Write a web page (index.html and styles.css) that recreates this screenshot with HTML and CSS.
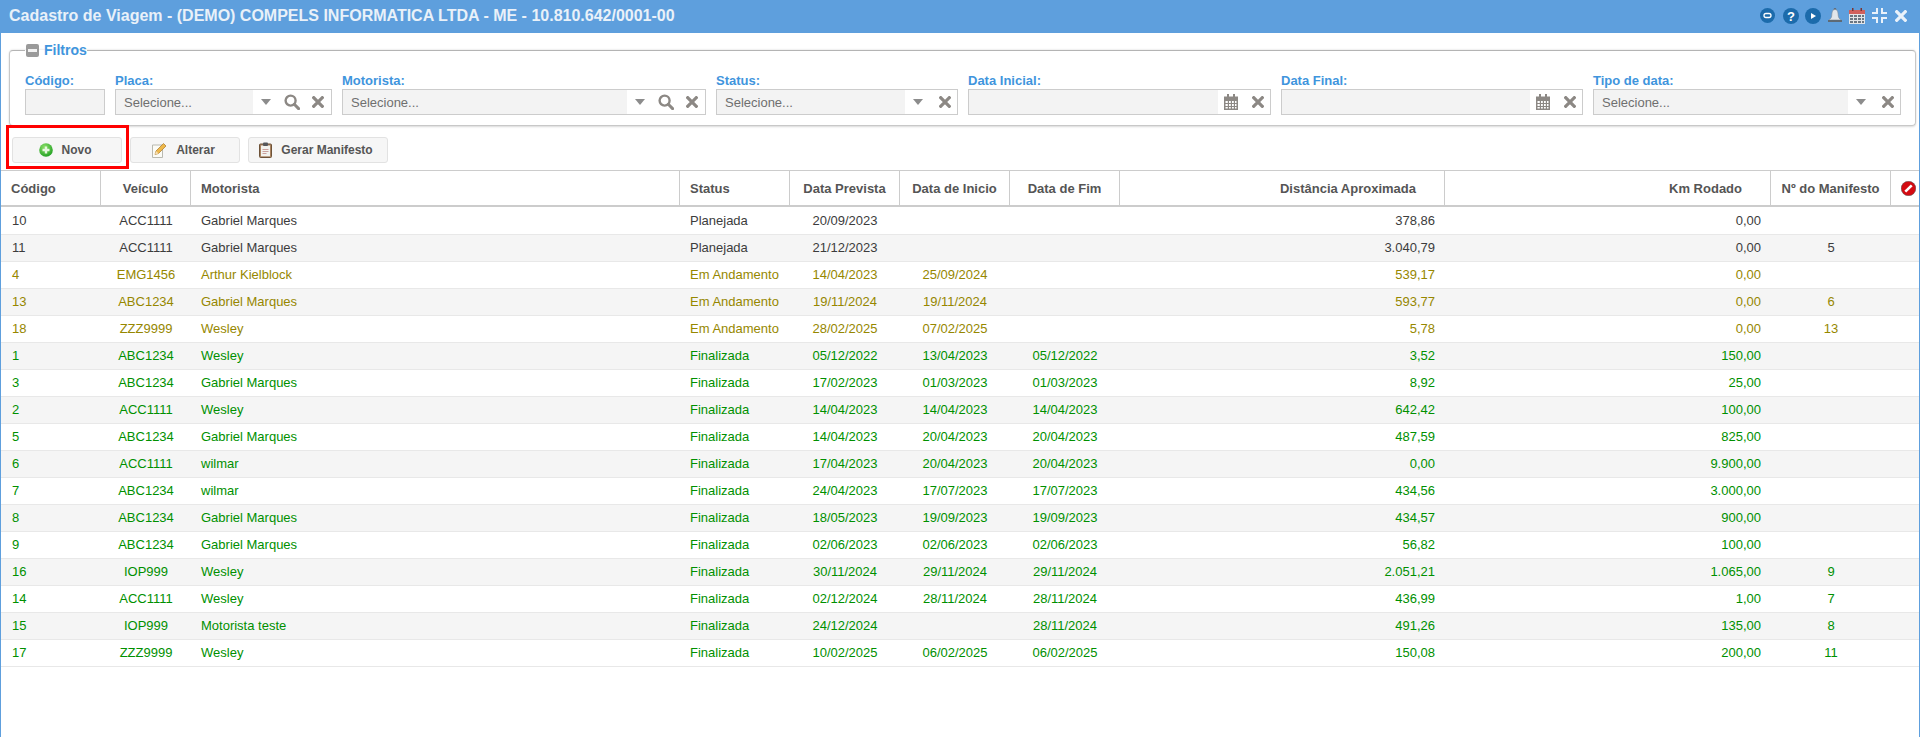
FILE: index.html
```html
<!DOCTYPE html>
<html lang="pt-BR">
<head>
<meta charset="utf-8">
<title>Cadastro de Viagem</title>
<link rel="stylesheet" href="styles.css">
</head>
<body>
<svg class="defs" width="0" height="0" aria-hidden="true">
  <symbol id="i-caret" viewBox="0 0 10 6"><path d="M0 0h10L5 6z" fill="#8c8c8c"/></symbol>
  <symbol id="i-search" viewBox="0 0 16 16"><circle cx="6.600" cy="6.600" r="5" fill="none" stroke="#8c8884" stroke-width="2.400"/><path d="M10.300 10.300l4.300 4.300" stroke="#8c8884" stroke-width="3" stroke-linecap="round"/></symbol>
  <symbol id="i-x" viewBox="0 0 12 12"><path d="M1.700 1.700l8.600 8.600M10.300 1.700l-8.600 8.600" stroke="#8c8884" stroke-width="3.200" stroke-linecap="square"/></symbol>
  <symbol id="i-cal" viewBox="0 0 14 16"><path d="M0 2.500h14V16H0z" fill="#8c8884"/><path d="M3 0h2v3H3zM9 0h2v3H9z" fill="#8c8884"/><path d="M1.500 7h2.300v2H1.500zM5 7h1.800v2H5zM8 7h1.800v2H8zM11 7h1.500v2H11zM1.500 10h2.300v2H1.500zM5 10h1.800v2H5zM8 10h1.800v2H8zM11 10h1.500v2H11zM1.500 13h2.300v1.500H1.500zM5 13h1.800v1.500H5zM8 13h1.800v1.500H8zM11 13h1.500v1.500H11z" fill="#fff"/></symbol>
</svg>
<div class="window">
  <header class="titlebar">
    <h1 class="title">Cadastro de Viagem - (DEMO) COMPELS INFORMATICA LTDA - ME - 10.810.642/0001-00</h1>
    <div class="title-icons">
      <svg class="ti ti-chat" width="15" height="15" viewBox="0 0 15 15"><circle cx="7.500" cy="7.500" r="7.500" fill="#1c6bab"/><rect x="4" y="5.500" width="7" height="4" rx="2" fill="none" stroke="#fff" stroke-width="1.300"/></svg>
      <svg class="ti ti-help" width="16" height="16" viewBox="0 0 16 16"><circle cx="8" cy="8" r="8" fill="#1c6bab"/><text x="8" y="12.500" text-anchor="middle" class="q">?</text></svg>
      <svg class="ti ti-play" width="16" height="16" viewBox="0 0 16 16"><circle cx="8" cy="8" r="8" fill="#1c6bab"/><path d="M6 5l5 3-5 3z" fill="#fff"/></svg>
      <svg class="ti ti-bell" width="14" height="15" viewBox="0 0 14 15"><circle cx="7" cy="1.300" r="1.300" fill="#5e6a75"/><path d="M7 1.500C4 1.500 4 5 3.700 8 3.500 10 2.300 11 .8 12h12.400C11.700 11 10.500 10 10.300 8 10 5 10 1.500 7 1.500z" fill="#e2e6ea" stroke="#7f8a96" stroke-width=".6"/><path d="M0 12h14v2H0z" fill="#5e6a75"/></svg>
      <svg class="ti ti-calendar" width="16" height="16" viewBox="0 0 16 16"><path d="M0 2h16v14H0z" fill="#e2e5e8"/><path d="M0 2h16v4H0z" fill="#d0605c"/><path d="M3 0h1.500v3H3zM11.500 0H13v3h-1.500z" fill="#7c3330"/><path d="M1 7h3v2H1zM5 7h3v2H5zM9 7h3v2H9zM13 7h2v2h-2zM1 10h3v2H1zM5 10h3v2H5zM9 10h3v2H9zM13 10h2v2h-2zM1 13h3v2H1zM5 13h3v2H5zM9 13h3v2H9zM13 13h2v2h-2z" fill="#6a7580"/></svg>
      <svg class="ti ti-compress" width="15" height="15" viewBox="0 0 15 15"><path d="M5 0v5H0M10 0v5h5M5 15v-5H0M10 15v-5h5" fill="none" stroke="#eaf2fa" stroke-width="2"/></svg>
      <svg class="ti ti-close" width="12" height="12" viewBox="0 0 12 12"><path d="M1.700 1.700l8.600 8.600M10.300 1.700l-8.600 8.600" stroke="#eaf2fa" stroke-width="3.200" stroke-linecap="square"/></svg>
    </div>
  </header>

  <main class="content">
    <fieldset class="filters">
      <legend class="filters-legend"><span class="collapse"><span class="collapse-bar"></span></span>Filtros</legend>
      <div class="filter-grid">
        <div class="field"><label class="field-label">Código:</label><div class="box"><div class="box-input"></div></div></div>
        <div class="field"><label class="field-label">Placa:</label><div class="box"><div class="box-input">Selecione...</div><div class="box-tools tools-3"><svg class="ic-caret"><use href="#i-caret"/></svg><svg class="ic-search"><use href="#i-search"/></svg><svg class="ic-x"><use href="#i-x"/></svg></div></div></div>
        <div class="field"><label class="field-label">Motorista:</label><div class="box"><div class="box-input">Selecione...</div><div class="box-tools tools-3"><svg class="ic-caret"><use href="#i-caret"/></svg><svg class="ic-search"><use href="#i-search"/></svg><svg class="ic-x"><use href="#i-x"/></svg></div></div></div>
        <div class="field"><label class="field-label">Status:</label><div class="box"><div class="box-input">Selecione...</div><div class="box-tools tools-2"><svg class="ic-caret"><use href="#i-caret"/></svg><svg class="ic-x"><use href="#i-x"/></svg></div></div></div>
        <div class="field"><label class="field-label">Data Inicial:</label><div class="box"><div class="box-input"></div><div class="box-tools tools-2"><svg class="ic-cal"><use href="#i-cal"/></svg><svg class="ic-x"><use href="#i-x"/></svg></div></div></div>
        <div class="field"><label class="field-label">Data Final:</label><div class="box"><div class="box-input"></div><div class="box-tools tools-2"><svg class="ic-cal"><use href="#i-cal"/></svg><svg class="ic-x"><use href="#i-x"/></svg></div></div></div>
        <div class="field"><label class="field-label">Tipo de data:</label><div class="box"><div class="box-input">Selecione...</div><div class="box-tools tools-2"><svg class="ic-caret"><use href="#i-caret"/></svg><svg class="ic-x"><use href="#i-x"/></svg></div></div></div>
      </div>
    </fieldset>

    <div class="toolbar">
      <button class="btn btn-new" type="button">
        <svg width="14" height="14" viewBox="0 0 14 14"><defs><radialGradient id="g-new" cx="40%" cy="30%" r="80%"><stop offset="0" stop-color="#8ee06a"/><stop offset="1" stop-color="#179a1c"/></radialGradient></defs><circle cx="7" cy="7" r="6.800" fill="url(#g-new)"/><path d="M5.800 3.500h2.400v2.300h2.300v2.400H8.200v2.300H5.800V8.200H3.500V5.800h2.300z" fill="#e8f7e0"/></svg>
        Novo
        <span class="btn-highlight"></span>
      </button>
      <button class="btn btn-edit" type="button">
        <svg width="16" height="16" viewBox="0 0 16 16"><path d="M1.500 3h10v12.500h-10z" fill="#fbfbf6" stroke="#b9b9b0"/><path d="M4 12.500l1-3.500 7.500-7.500 2.500 2.500L7.500 11.500z" fill="#eeb84a" stroke="#a8772a" stroke-width=".7"/><path d="M4 12.500l1-3.500 2.500 2.500z" fill="#f6dfb5"/></svg>
        Alterar
      </button>
      <button class="btn btn-manifest" type="button">
        <svg width="13" height="16" viewBox="0 0 13 16"><rect x=".5" y="2" width="12" height="13.500" rx="1" fill="#a9825f" stroke="#6d5238"/><rect x="2" y="3.500" width="9" height="10.800" fill="#f2f2ee"/><rect x="4" y=".5" width="5" height="3.500" rx="1" fill="#54565a"/><path d="M3.500 7.500h6M3.500 9.500h6M3.500 11.500h4" stroke="#c08a86" stroke-width=".8"/></svg>
        Gerar Manifesto
      </button>
    </div>

    <table class="grid">
      <colgroup>
        <col class="c-code"><col class="c-plate"><col class="c-driver"><col class="c-date"><col class="c-date"><col class="c-date"><col class="c-date"><col class="c-dist"><col class="c-km"><col class="c-man"><col class="c-end">
      </colgroup>
      <thead>
        <tr>
          <th class="left">Código</th><th>Veículo</th><th class="left">Motorista</th><th class="left">Status</th><th>Data Prevista</th><th>Data de Inicio</th><th>Data de Fim</th><th class="right">Distância Aproximada</th><th class="right">Km Rodado</th><th>Nº do Manifesto</th>
          <th class="end"><svg width="15" height="15" viewBox="0 0 14 14"><circle cx="7" cy="7" r="6.800" fill="#d40b12" stroke="#555" stroke-width=".5"/><path d="M4 10l6-6" stroke="#fff" stroke-width="2.400"/></svg></th>
        </tr>
      </thead>
      <tbody>
        <tr class="planned"><td class="left">10</td><td>ACC1111</td><td class="left">Gabriel Marques</td><td class="left">Planejada</td><td>20/09/2023</td><td></td><td></td><td class="right">378,86</td><td class="right">0,00</td><td></td><td></td></tr>
        <tr class="planned"><td class="left">11</td><td>ACC1111</td><td class="left">Gabriel Marques</td><td class="left">Planejada</td><td>21/12/2023</td><td></td><td></td><td class="right">3.040,79</td><td class="right">0,00</td><td>5</td><td></td></tr>
        <tr class="running"><td class="left">4</td><td>EMG1456</td><td class="left">Arthur Kielblock</td><td class="left">Em Andamento</td><td>14/04/2023</td><td>25/09/2024</td><td></td><td class="right">539,17</td><td class="right">0,00</td><td></td><td></td></tr>
        <tr class="running"><td class="left">13</td><td>ABC1234</td><td class="left">Gabriel Marques</td><td class="left">Em Andamento</td><td>19/11/2024</td><td>19/11/2024</td><td></td><td class="right">593,77</td><td class="right">0,00</td><td>6</td><td></td></tr>
        <tr class="running"><td class="left">18</td><td>ZZZ9999</td><td class="left">Wesley</td><td class="left">Em Andamento</td><td>28/02/2025</td><td>07/02/2025</td><td></td><td class="right">5,78</td><td class="right">0,00</td><td>13</td><td></td></tr>
        <tr class="done"><td class="left">1</td><td>ABC1234</td><td class="left">Wesley</td><td class="left">Finalizada</td><td>05/12/2022</td><td>13/04/2023</td><td>05/12/2022</td><td class="right">3,52</td><td class="right">150,00</td><td></td><td></td></tr>
        <tr class="done"><td class="left">3</td><td>ABC1234</td><td class="left">Gabriel Marques</td><td class="left">Finalizada</td><td>17/02/2023</td><td>01/03/2023</td><td>01/03/2023</td><td class="right">8,92</td><td class="right">25,00</td><td></td><td></td></tr>
        <tr class="done"><td class="left">2</td><td>ACC1111</td><td class="left">Wesley</td><td class="left">Finalizada</td><td>14/04/2023</td><td>14/04/2023</td><td>14/04/2023</td><td class="right">642,42</td><td class="right">100,00</td><td></td><td></td></tr>
        <tr class="done"><td class="left">5</td><td>ABC1234</td><td class="left">Gabriel Marques</td><td class="left">Finalizada</td><td>14/04/2023</td><td>20/04/2023</td><td>20/04/2023</td><td class="right">487,59</td><td class="right">825,00</td><td></td><td></td></tr>
        <tr class="done"><td class="left">6</td><td>ACC1111</td><td class="left">wilmar</td><td class="left">Finalizada</td><td>17/04/2023</td><td>20/04/2023</td><td>20/04/2023</td><td class="right">0,00</td><td class="right">9.900,00</td><td></td><td></td></tr>
        <tr class="done"><td class="left">7</td><td>ABC1234</td><td class="left">wilmar</td><td class="left">Finalizada</td><td>24/04/2023</td><td>17/07/2023</td><td>17/07/2023</td><td class="right">434,56</td><td class="right">3.000,00</td><td></td><td></td></tr>
        <tr class="done"><td class="left">8</td><td>ABC1234</td><td class="left">Gabriel Marques</td><td class="left">Finalizada</td><td>18/05/2023</td><td>19/09/2023</td><td>19/09/2023</td><td class="right">434,57</td><td class="right">900,00</td><td></td><td></td></tr>
        <tr class="done"><td class="left">9</td><td>ABC1234</td><td class="left">Gabriel Marques</td><td class="left">Finalizada</td><td>02/06/2023</td><td>02/06/2023</td><td>02/06/2023</td><td class="right">56,82</td><td class="right">100,00</td><td></td><td></td></tr>
        <tr class="done"><td class="left">16</td><td>IOP999</td><td class="left">Wesley</td><td class="left">Finalizada</td><td>30/11/2024</td><td>29/11/2024</td><td>29/11/2024</td><td class="right">2.051,21</td><td class="right">1.065,00</td><td>9</td><td></td></tr>
        <tr class="done"><td class="left">14</td><td>ACC1111</td><td class="left">Wesley</td><td class="left">Finalizada</td><td>02/12/2024</td><td>28/11/2024</td><td>28/11/2024</td><td class="right">436,99</td><td class="right">1,00</td><td>7</td><td></td></tr>
        <tr class="done"><td class="left">15</td><td>IOP999</td><td class="left">Motorista teste</td><td class="left">Finalizada</td><td>24/12/2024</td><td></td><td>28/11/2024</td><td class="right">491,26</td><td class="right">135,00</td><td>8</td><td></td></tr>
        <tr class="done"><td class="left">17</td><td>ZZZ9999</td><td class="left">Wesley</td><td class="left">Finalizada</td><td>10/02/2025</td><td>06/02/2025</td><td>06/02/2025</td><td class="right">150,08</td><td class="right">200,00</td><td>11</td><td></td></tr>
      </tbody>
    </table>
  </main>
</div>
</body>
</html>
```

FILE: styles.css
```css
* { box-sizing: border-box; }
html, body { margin: 0; height: 100%; overflow: hidden; background: #fff; }
body { font-family: "Liberation Sans", Arial, sans-serif; font-size: 13px; color: #444; }
.defs { position: absolute; }

.window { height: 100vh; border-left: 1px solid #5e9fdd; border-right: 1px solid #5e9fdd; display: flex; flex-direction: column; }

.titlebar { flex: none; height: 33px; background: #5e9fdd; margin: 0 -1px; padding: 0 13px 2px 9px; display: flex; align-items: center; justify-content: space-between; }
.title { margin: 0; font-size: 16px; font-weight: bold; color: #e9f1f9; white-space: nowrap; }
.title-icons { display: flex; align-items: center; }
.ti { display: block; flex: none; }
.ti-help { margin-left: 8px; }
.ti-play { margin-left: 6px; }
.ti-bell { margin-left: 7px; }
.ti-calendar { margin-left: 7px; }
.ti-compress { margin-left: 7px; }
.ti-close { margin-left: 8px; }
.q { font: bold 13px "Liberation Sans", Arial, sans-serif; fill: #fff; }

.content { flex: 1; min-height: 0; }

.filters { margin: 8px 3px 0 8px; padding: 11px 14px 10px 15px; height: 85px; border: 1px solid #c8c8c8; border-top-color: #b4b4b4; border-radius: 4px; box-shadow: 0 1px 2px rgba(0,0,0,.15), 0 -1px 2px rgba(0,0,0,.06); min-width: 0; }
.filters-legend { padding: 0 0 0 1px; margin-left: 0; font-size: 14px; font-weight: bold; color: #3f95dd; display: flex; align-items: center; height: 18px; }
.collapse { width: 13px; height: 13px; background: #9a9a9a; border-radius: 2px; display: flex; align-items: center; justify-content: center; margin-right: 5px; }
.collapse-bar { width: 9px; height: 3px; background: #f2f2f2; }

.filter-grid { display: grid; grid-template-columns: 80px 217px 364px 242px 303px 302px 308px; column-gap: 10px; }
.field { min-width: 0; }
.field-label { display: block; height: 19px; line-height: 21px; font-size: 13px; font-weight: bold; color: #3f95dd; }
.box { height: 26px; border: 1px solid #ccc; display: flex; background: #fff; }
.box-input { flex: 1; background: #f3f3f3; padding-left: 8px; line-height: 25px; font-size: 13px; color: #6f6f6f; }
.box-tools { flex: none; display: flex; align-items: center; }
.tools-3 { width: 78px; }
.tools-2 { width: 52px; }
.ic-caret { width: 10px; height: 6px; margin-left: 8px; }
.ic-search { width: 16px; height: 16px; margin-left: 13px; }
.ic-x { width: 12px; height: 12px; margin-left: 12px; }
.tools-2 .ic-caret + .ic-x { margin-left: 16px; }
.ic-cal { width: 14px; height: 16px; margin-left: 6px; }
.tools-2 .ic-cal + .ic-x { margin-left: 14px; }

.toolbar { display: flex; gap: 8px; margin: 11px 0 7px 11px; }
.btn { height: 26px; padding: 0 4px 0 0; border: 1px solid #e2e2e2; border-radius: 3px; background: #f6f6f6; display: flex; align-items: center; justify-content: center; font: bold 12px "Liberation Sans", Arial, sans-serif; color: #555; position: relative; }
.btn svg { margin-right: 9px; }
.btn-new, .btn-edit { width: 110px; }
.btn-manifest { width: 140px; }
.btn-highlight { position: absolute; left: -7px; top: -13px; right: -8px; bottom: -7px; border: 3px solid #f00; pointer-events: none; }

.grid { width: 1918px; table-layout: fixed; border-collapse: separate; border-spacing: 0; }
.c-code { width: 100px; }
.c-plate { width: 90px; }
.c-driver { width: 489px; }
.c-date { width: 110px; }
.c-dist { width: 325px; }
.c-km { width: 326px; }
.c-man { width: 120px; }
.c-end { width: 28px; }

.grid th { height: 37px; padding: 0 10px; font-size: 13px; font-weight: bold; color: #555; text-align: center; border-top: 1px solid #ccc; border-right: 1px solid #ccc; border-bottom: 2px solid #ccc; white-space: nowrap; }
.grid th.left { text-align: left; }
.grid th.right { text-align: right; padding-right: 28px; }
.grid th.end { border-right: 0; padding: 1px 0 0 6px; }
.grid th.end svg { display: block; margin: 0 auto; }
.grid td { height: 27px; padding: 0 10px 1px; font-size: 13px; text-align: center; border-bottom: 1px solid #e8e8e8; white-space: nowrap; }
.grid td:first-child { padding-left: 11px; }
.grid tbody tr:first-child td { height: 28px; padding-top: 1px; }
.grid td.left { text-align: left; }
.grid td.right { text-align: right; }
.grid tbody tr:nth-child(even) { background: #f5f5f5; }
.planned { color: #3c3c3c; }
.running { color: #968700; }
.done { color: #009000; }
```
